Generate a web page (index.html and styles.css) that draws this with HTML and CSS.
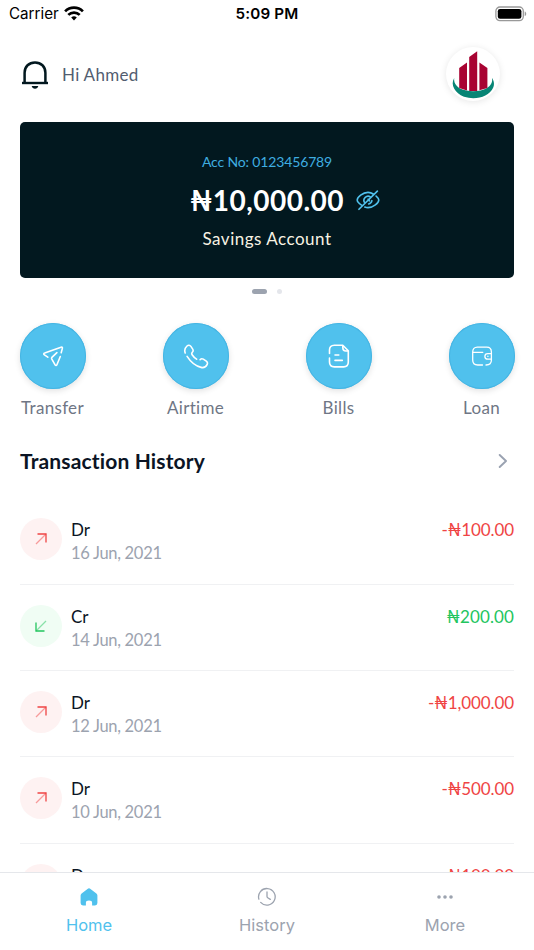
FILE: index.html
```html
<!DOCTYPE html>
<html lang="en">
<head>
<meta charset="utf-8">
<title>Home</title>
<link rel="stylesheet" href="styles.css">
</head>
<body>
<div class="app">
  <div class="status">
    <div class="carrier"><span>Carrier</span>
      <svg width="20" height="15" viewBox="0 0 20 15" fill="none" stroke="#000" stroke-width="2.7"><path d="M1.1 5.4a12.6 12.6 0 0 1 17.8 0M4.3 8.9a8.1 8.1 0 0 1 11.4 0"/><path d="M10 14.4l-2.8-2.9a4 4 0 0 1 5.6 0z" fill="#000" stroke="none"/></svg>
    </div>
    <div class="time">5:09 PM</div>
    <svg class="battery" width="32" height="16" viewBox="0 0 32 16"><rect x=".9" y="1" width="27.4" height="13.6" rx="4" fill="#fff" stroke="#999" stroke-width="1.3"/><rect x="2.8" y="2.9" width="23.6" height="9.8" rx="2.3"/><path d="M29.7 5.500c2 .7 2 3.900 0 4.600z" fill="#999"/></svg>
  </div>

  <header class="header">
    <svg width="26" height="28" viewBox="0 0 26 28" fill="none" stroke="#02181f" stroke-width="2.5"><path d="M2.600 22V11.700C2.600 5.600 7 1.400 13 1.400s10.400 4.200 10.400 10.300V22"/><path d="M0 22h26" stroke-width="2.4"/><path d="M9.700 25h6.600c-.5 1.700-1.600 2.700-3.300 2.700S10.200 26.700 9.700 25z" fill="#02181f" stroke="none"/></svg>
    <span class="hello">Hi Ahmed</span>
    <div class="avatar"><svg width="54" height="54" viewBox="0 0 54 54"><path d="M8.200 31C4 38 9 46 18 49.800c12 3.700 25-.2 29-8.800 1.800-3.300 1-7.300-1-10 .8 4-1 7.500-5 10-7 4-19 4.200-26.500.7C9.800 39 7.700 35.500 8.200 31z" fill="#078575"/><path d="M13.200 21l7.800-5.500v28l-7.800-2.500zM23.200 10l8-5.700V44h-8zM33.400 15.500l8 5.500V41l-8 2.300z" fill="#a80332"/></svg></div>
  </header>

  <section class="card">
    <div class="acc">Acc No: 0123456789</div>
    <div class="balance"><span class="sum">₦10,000.00</span>
      <svg width="24" height="21" viewBox="0 0 25 22" fill="none" stroke="#50c1ed" stroke-width="1.700" stroke-linecap="round"><path d="M5.700 15.800C3.300 14.300 1.200 12 1.200 10.500c0-3 5.800-8 11.300-8 2.200 0 4.200.8 6 1.900M21 6.300c1.700 1.400 2.800 3 2.800 4.200 0 3-5.800 8-11.300 8-1.200 0-2.300-.2-3.300-.6M9 13.200a4.300 4.300 0 0 1 6.200-5.800M16.600 11.200a4.300 4.300 0 0 1-3.400 3.400M3 20.200L22.300 1.200M12.500 9.700c1 .1 1.600.9 1.400 1.700"/></svg>
    </div>
    <div class="kind">Savings Account</div>
  </section>
  <div class="dots"><i class="on"></i><i></i></div>

  <nav class="actions">
    <div class="action"><div class="disc"><svg width="24" height="24" viewBox="0 0 24 24"><path d="M6.800 13.200L3.400 10.900c-1-.7-.8-1.600.3-1.900L20 3.200c1.200-.4 1.700.2 1.300 1.400l-1.100 4.100M19.300 12.500l-3.400 8.300c-.4 1-1.300 1-1.800.1l-3.400-6c-.3-.6-.2-1.100.2-1.500l5-4.800"/></svg></div><span>Transfer</span></div>
    <div class="action"><div class="disc"><svg width="26" height="26" viewBox="0 0 26 26"><path d="M2.200 10C1.200 7.300 1.900 4.900 4 3c1.300-1.200 2.900-1 3.900.4l1.800 2.700c.8 1.200.5 2.200-.4 3.200-.8.9-.8 1.500-.2 2.400 1.200 1.800 2.700 3.300 4.500 4.500M4.100 13.400c3.300 5.200 8.800 9.700 14 11 2.600.6 5-.8 6.100-3.100.6-1.300.2-2.300-.9-3.100l-3-2c-1.200-.8-2.200-.6-3.200.5"/></svg></div><span>Airtime</span></div>
    <div class="action"><div class="disc"><svg width="26" height="26" viewBox="0 0 26 26"><path d="M3.500 10.500V7c0-3 1.500-4.800 4.800-4.800h8.500l5.500 5.500V19c0 3.200-1.500 4.900-4.700 4.900H8.300c-3.200 0-4.800-1.700-4.800-4.900v-4M16.800 2.400v2.400c0 2.300.8 3.200 3 3.200h2.300M9 12h3.800M9 17.400h7.300"/></svg></div><span>Bills</span></div>
    <div class="action"><div class="disc"><svg class="thin" width="24" height="24" viewBox="0 0 24 24"><path d="M12.500 21H7.700c-3.200 0-5-1.800-5-5V8c0-3 1.700-4.900 4.600-4.900h9.400c2.900 0 4.700 1.900 4.700 4.900v8c0 3.300-1.900 5-5.400 5M3 8.300h9.800M21.300 9.600h-3.500c-3.900 0-3.900 5.600 0 5.600h3.500M17.900 12.200v.2"/></svg></div><span>Loan</span></div>
  </nav>

  <div class="section-title"><h2>Transaction History</h2>
    <svg width="10" height="14" viewBox="0 0 10 14" fill="none" stroke="#9aa2b1" stroke-width="1.9" stroke-linecap="round" stroke-linejoin="round"><path d="M1.700 1l6.300 6-6.300 6"/></svg>
  </div>

  <main class="list">
    <div class="row dr"><div class="badge"><svg viewBox="0 0 12 12"><path class="faint" d="M1 11L11 1"/><path d="M2.500 1H11v8.500"/></svg></div><div class="info"><b>Dr</b><span>16 Jun, 2021</span></div><div class="amount">-₦100.00</div></div>
    <div class="row cr"><div class="badge"><svg viewBox="0 0 12 12"><path class="faint" d="M11 1L1 11"/><path d="M1 2.500V11h8.500"/></svg></div><div class="info"><b>Cr</b><span>14 Jun, 2021</span></div><div class="amount">₦200.00</div></div>
    <div class="row dr"><div class="badge"><svg viewBox="0 0 12 12"><path class="faint" d="M1 11L11 1"/><path d="M2.500 1H11v8.500"/></svg></div><div class="info"><b>Dr</b><span>12 Jun, 2021</span></div><div class="amount">-₦1,000.00</div></div>
    <div class="row dr"><div class="badge"><svg viewBox="0 0 12 12"><path class="faint" d="M1 11L11 1"/><path d="M2.500 1H11v8.500"/></svg></div><div class="info"><b>Dr</b><span>10 Jun, 2021</span></div><div class="amount">-₦500.00</div></div>
    <div class="row dr"><div class="badge"></div><div class="info"><b>Dr</b></div><div class="amount">-₦100.00</div></div>
  </main>

  <nav class="tabs">
    <div class="tab active"><svg width="20" height="20" viewBox="0 0 20 20"><path d="M8.500 1.900Q10 .8 11.500 1.900l5.900 4.500q1 .8 1 2V16q0 2.400-2.400 2.400h-2.900v-2.600q0-2.200-3.100-2.200t-3.100 2.200v2.600H4q-2.400 0-2.400-2.400V8.400q0-1.200 1-2z" fill="#50c1ed"/></svg><span>Home</span></div>
    <div class="tab"><svg width="20" height="20" viewBox="0 0 20 20" fill="none" stroke="#9ca3af" stroke-width="1.300" stroke-linecap="round"><path d="M1.900 12.200A8.300 8.300 0 1 1 3.700 15.400M10 4.900v4.700q0 .8.700 1.200l2.600 1.600"/></svg><span>History</span></div>
    <div class="tab"><svg width="20" height="20" viewBox="0 0 20 20" fill="#9ca3af"><circle cx="4" cy="10" r="1.800"/><circle cx="10" cy="10" r="1.800"/><circle cx="16" cy="10" r="1.800"/></svg><span>More</span></div>
  </nav>
</div>
</body>
</html>
```
FILE: styles.css
```css
* { box-sizing: border-box; }
body { margin: 0; background: #fff; font-family: Lato, "Noto Sans", sans-serif; font-variant-ligatures: none; color: #0b1424; }
svg { display: block; flex: none; }
.app { height: 950px; display: flex; flex-direction: column; overflow: hidden; }
.status { height: 28px; flex: none; display: grid; grid-template-columns: 1fr auto 1fr; align-items: center; padding: 0 7px 0 9px; font: 15.200px/20px Inter, sans-serif; color: #000; }
.carrier { display: flex; gap: 5px; align-items: center; }
.carrier svg { margin-top: -2px; }
.time { font-weight: 600; letter-spacing: .2px; margin-right: 2px; }
.battery { justify-self: end; margin-top: -1px; }
.header { height: 93px; flex: none; display: flex; align-items: center; padding: 0 34px 0 22px; }
.hello { margin: 0 0 0 14px; font-size: 17px; letter-spacing: .3px; color: #525d70; }
.avatar { margin: -1px 0 0 auto; width: 54px; height: 54px; border-radius: 50%; box-shadow: 0 1px 7px #0000001a; }
.card { height: 156px; flex: none; margin: .7px 20px 0; border-radius: 5px; background: #02181f; display: flex; flex-direction: column; align-items: center; padding-top: 30.500px; }
.acc { font-size: 14px; line-height: 20px; letter-spacing: -.15px; color: #3fade0; }
.balance { display: flex; align-items: center; gap: 12px; height: 40px; margin: 8px 0 9px 36px; color: #fff; }
.sum { font-size: 28px; font-weight: 700; letter-spacing: .5px; }
.kind { font-size: 17px; line-height: 20px; letter-spacing: .5px; color: #f8f3e4; }
.dots { height: 28px; flex: none; display: flex; gap: 10px; align-items: center; justify-content: center; }
.dots i { width: 5px; height: 5px; border-radius: 3px; background: #e4e6eb; }
.dots .on { width: 15px; background: #9ca3af; }
.actions { margin: 17px 19px 0; display: flex; justify-content: space-between; flex: none; }
.action { width: 67px; display: flex; flex-direction: column; align-items: center; font-size: 17px; line-height: 20px; letter-spacing: .3px; color: #6f7685; }
.disc { width: 66px; height: 66px; margin: 0 0 9px; border-radius: 50%; background: #50c1ed; display: grid; place-items: center; box-shadow: 0 2px 6px #0000001f, inset 0 0 0 1px #46b5e3; }
.disc svg { fill: none; stroke: #fff; stroke-width: 1.600; stroke-linecap: round; stroke-linejoin: round; }
.disc .thin { stroke-width: 1.300; }
.section-title { height: 80.500px; flex: none; display: flex; align-items: center; justify-content: space-between; padding: 6px 26px 0 20px; }
h2 { margin: 0; font-size: 21px; line-height: 26px; font-weight: 700; letter-spacing: .15px; }
.list { flex: 1; min-height: 0; overflow: hidden; padding: 0 20px; }
.row { height: 86.400px; display: flex; align-items: flex-start; padding-top: 20px; border-bottom: 1px solid #f0f1f3; }
.badge { width: 42px; height: 42px; border-radius: 50%; display: grid; place-items: center; background: #fef2f2; stroke: #ef4444; }
.cr .badge { background: #f0fdf4; stroke: #22c55e; }
.badge svg { width: 12px; height: 12px; fill: none; stroke-width: 1.300; }
.faint { opacity: .5; }
.info { margin-left: 9px; display: flex; flex-direction: column; font-size: 17px; line-height: 23px; }
.info b { font-weight: 400; }
.info span { color: #9ca3af; font-size: 16.500px; line-height: 25px; letter-spacing: -.3px; }
.amount { margin-left: auto; font-size: 17px; line-height: 23px; letter-spacing: -.1px; color: #ef4444; }
.cr .amount { color: #22c55e; letter-spacing: .1px; }
.tabs { height: 78px; flex: none; border-top: 1px solid #e5e7eb; display: grid; grid-template-columns: repeat(3, 1fr); }
.tab { display: flex; flex-direction: column; align-items: center; padding-top: 14px; gap: 8px; font: 16.500px/21px Inter, sans-serif; color: #9ca3af; }
.active { color: #50c1ed; }
```
